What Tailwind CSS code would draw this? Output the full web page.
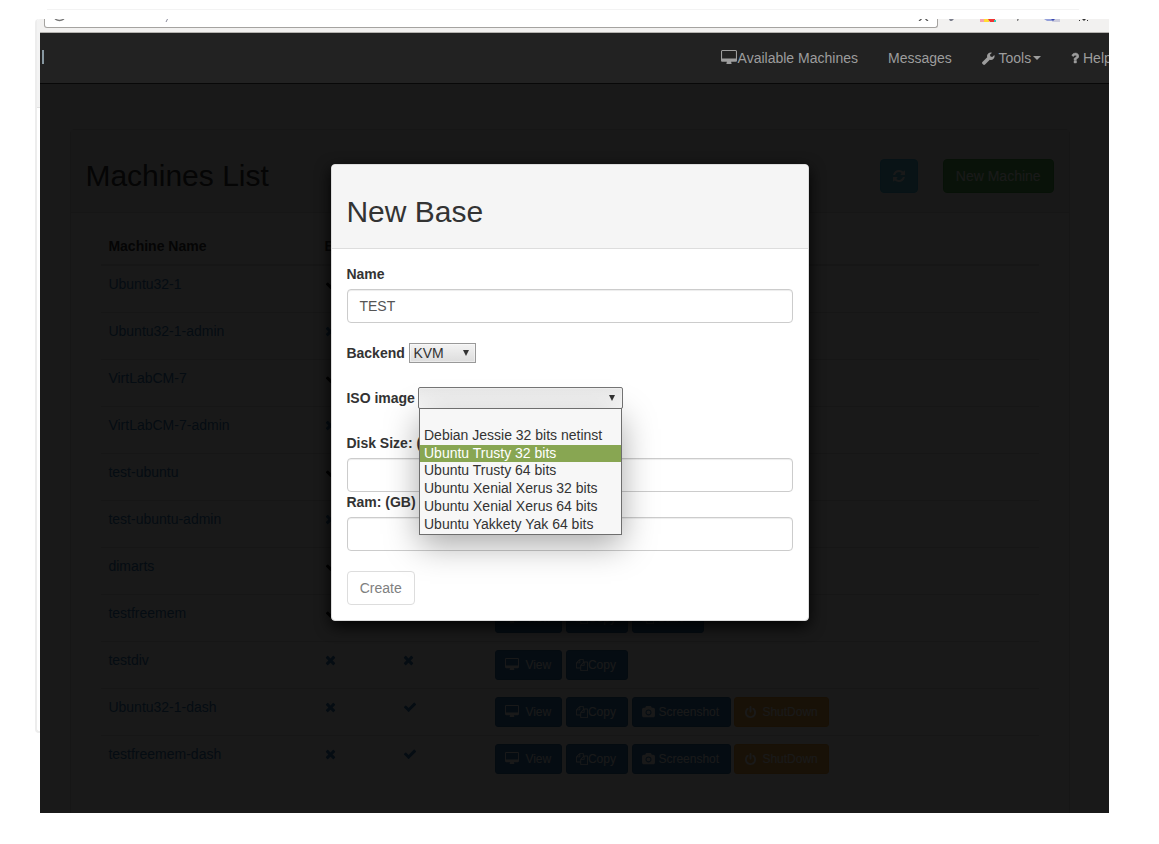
<!DOCTYPE html>
<html lang="en">
<head>
<meta charset="utf-8">
<title>Machines List</title>
<script src="https://cdn.jsdelivr.net/npm/@tailwindcss/browser@4"></script>
</head>
<body class="relative h-[844px] -indent-[0.6px] overflow-hidden bg-white font-['Liberation_Sans',Arial,sans-serif] text-[14px] leading-5 text-[#333]">
<svg class="hidden">
  <symbol id="desktop" viewBox="64 0 1920 1792"><path d="M1856 992v-832q0-13-9.5-22.5t-22.5-9.5h-1600q-13 0-22.5 9.5t-9.5 22.5v832q0 13 9.5 22.5t22.5 9.5h1600q13 0 22.5-9.5t9.5-22.5zm128-832v1088q0 66-47 113t-113 47h-544q0 37 16 77.5t32 71 16 43.5q0 26-19 45t-45 19h-512q-26 0-45-19t-19-45q0-14 16-44t32-70 16-78h-544q-66 0-113-47t-47-113v-1088q0-66 47-113t113-47h1600q66 0 113 47t47 113z"/></symbol>
  <symbol id="check" viewBox="0 0 1792 1792"><path d="M1671 566q0 40-28 68l-724 724-136 136q-28 28-68 28t-68-28l-136-136-362-362q-28-28-28-68t28-68l136-136q28-28 68-28t68 28l294 295 656-657q28-28 68-28t68 28l136 136q28 28 28 68z"/></symbol>
  <symbol id="times" viewBox="192 0 1408 1792"><path d="M1490 1322q0 40-28 68l-136 136q-28 28-68 28t-68-28l-294-294-294 294q-28 28-68 28t-68-28l-136-136q-28-28-28-68t28-68l294-294-294-294q-28-28-28-68t28-68l136-136q28-28 68-28t68 28l294 294 294-294q28-28 68-28t68 28l136 136q28 28 28 68t-28 68l-294 294 294 294q28 28 28 68z"/></symbol>
  <symbol id="refresh" viewBox="128 0 1536 1792"><path d="M1639 1056q0 5-1 7-64 268-268 434.5t-478 166.5q-146 0-282.5-55t-243.5-157l-129 129q-19 19-45 19t-45-19-19-45v-448q0-26 19-45t45-19h448q26 0 45 19t19 45-19 45l-137 137q71 66 161 102t187 36q134 0 250-65t186-179q11-17 53-117 8-23 30-23h192q13 0 22.5 9.5t9.5 22.5zm25-800v448q0 26-19 45t-45 19h-448q-26 0-45-19t-19-45 19-45l138-138q-148-137-349-137-134 0-250 65t-186 179q-11 17-53 117-8 23-30 23h-199q-13 0-22.5-9.5t-9.5-22.5v-7q65-268 270-434.5t480-166.5q146 0 284 55.5t245 156.5l130-129q19-19 45-19t45 19 19 45z"/></symbol>
  <symbol id="wrench" viewBox="0 0 14 14"><path d="M13.300 3.200L11 5.500 9.200 4.800 8.500 3 10.800.7A4 4 0 0 0 5.600 5.600L.7 10.500a1.700 1.700 0 0 0 0 2.500l.3.300a1.700 1.700 0 0 0 2.500 0L8.400 8.400A4 4 0 0 0 13.300 3.200z"/></symbol>
  <symbol id="question" viewBox="384 0 1024 1792"><path stroke="currentColor" stroke-width="60" d="M1088 1256v240q0 16-12 28t-28 12h-240q-16 0-28-12t-12-28v-240q0-16 12-28t28-12h240q16 0 28 12t12 28zm316-600q0 54-15.500 101t-35 76.500-55 59.500-57.500 43.500-61 35.500q-41 23-68.500 65t-27.500 67q0 17-12 32.500t-28 15.500h-240q-15 0-25.500-18.500t-10.500-37.500v-45q0-83 65-156.500t143-108.500q59-27 84-56t25-76q0-42-46.500-74t-107.500-32q-65 0-108 29-35 25-107 115-13 16-31 16-12 0-25-8l-164-125q-13-10-15.500-25t5.500-28q160-266 464-266 80 0 161 31t146 83 106 127.500 41 158.500z"/></symbol>
  <symbol id="camera" viewBox="0 0 1920 1792"><path d="M960 672q119 0 203.5 84.500t84.500 203.500-84.500 203.500-203.500 84.500-203.500-84.500-84.500-203.500 84.500-203.500 203.500-84.500zm704-416q106 0 181 75t75 181v896q0 106-75 181t-181 75h-1408q-106 0-181-75t-75-181v-896q0-106 75-181t181-75h224l51-136q19-49 69.500-84.500t103.500-35.500h512q53 0 103.500 35.500t69.500 84.500l51 136h224zm-704 1152q185 0 316.500-131.500t131.500-316.500-131.500-316.500-316.500-131.500-316.500 131.500-131.500 316.500 131.500 316.500 316.500 131.500z"/></symbol>
  <symbol id="power" viewBox="128 0 1536 1792"><path d="M1664 896q0 156-61 298t-164 245-245 164-298 61-298-61-245-164-164-245-61-298q0-182 80.500-343t226.500-270q43-32 95.500-25t83.500 50q32 42 24.500 94.500t-49.500 84.500q-98 74-151.500 181t-53.500 228q0 104 40.500 198.500t109.500 163.500 163.500 109.500 198.500 40.500 198.500-40.500 163.500-109.500 109.500-163.500 40.500-198.500q0-121-53.500-228t-151.500-181q-42-32-49.500-84.500t24.500-94.500q31-43 84-50t95 25q146 109 226.500 270t80.500 343zm-640-768v640q0 52-38 90t-90 38-90-38-38-90v-640q0-52 38-90t90-38 90 38 38 90z"/></symbol>
  <symbol id="copy" viewBox="0 0 1792 1792"><path d="M1696 384q40 0 68 28t28 68v1216q0 40-28 68t-68 28h-960q-40 0-68-28t-28-68v-288h-544q-40 0-68-28t-28-68v-672q0-40 20-88t48-76l408-408q28-28 76-48t88-20h416q40 0 68 28t28 68v328q68-40 128-40h416zm-544 213l-299 299h299v-299zm-640-384l-299 299h299v-299zm196 647l316-316v-416h-384v416q0 40-28 68t-68 28h-416v640h512v-256q0-40 20-88t48-76zm956 804v-1152h-384v416q0 40-28 68t-68 28h-416v640h896z"/></symbol>
</svg>

<div class="ml-[47px] mt-[9px] h-px w-[1032px] bg-[#f3f3f3]"></div>

<div class="flex pt-[9px]">
  <!-- window edge left of the page -->
  <div class="ml-[35px] h-[714px] w-[5px] rounded-l-[4px] border-l-2 border-b-2 border-[#ededed]">
    <div class="h-[89px] rounded-tl-[3px] border-b border-[#e2e2e2] bg-[#f3f3f3]"></div>
  </div>

  <div class="h-[794px] w-[1069px] overflow-hidden">
    <!-- browser toolbar -->
    <div class="flex h-[14px] border-b border-[#b5b3b0] bg-[#f2f1f0]">
      <div class="ml-1 flex h-[9px] w-[894px] justify-between overflow-hidden rounded-b-[3px] border border-t-0 border-[#a5a3a0] bg-white pr-[8px] pl-[9px]">
        <div class="flex gap-[100px]">
          <svg class="h-[3px] w-[11px]" viewBox="0 0 11 3"><path d="M1 0q4.500 3 9 0" fill="none" stroke="#777" stroke-width="1.500"/></svg>
          <svg class="h-[3px] w-[3px]" viewBox="0 0 3 3"><path d="M2.500 0L1 3" stroke="#889" stroke-width="1"/></svg>
        </div>
        <svg class="h-[2px] w-[11px]" viewBox="0 0 11 2"><path d="M3.500 0L1 2M7.500 0L10 2" stroke="#555" stroke-width="1.300"/></svg>
      </div>
      <svg class="ml-[10px] h-[3px] w-[150px]" viewBox="0 0 150 3">
        <path d="M1 0h5l-2 2h-2z" fill="#7c7f8c"/>
        <path d="M32 0h4v3h-4z" fill="#f4a0b0"/><path d="M36 0h5v3h-5z" fill="#fd3"/><path d="M40 0h7v3h-5z" fill="#e33"/><path d="M46 1h2v2h-2z" fill="#3cb"/>
        <path d="M69 0h2l-1 2h-1z" fill="#888"/>
        <path d="M96 0h9v2h-6z" fill="#94a0da"/><path d="M105 0h7v3h-8z" fill="#ccd"/><path d="M103 0h4l-2 2z" fill="#3948b0"/>
        <path d="M131 1h1v1h-1zM139 1h1v1h-1zM134 0h4l-2 2z" fill="#333"/>
      </svg>
    </div>

    <!-- navbar -->
    <nav class="flex h-[51px] items-start border-b border-[#080808] bg-[#222] pt-[15px] indent-0 whitespace-nowrap text-[#9d9d9d]">
      <div class="mt-[2px] ml-[2px] h-[14px] w-[2px] shrink-0 bg-[#8797a0]"></div>
      <div class="ml-[677px] flex w-[167px] shrink-0 items-center"><svg class="mr-[0.6px] mb-px h-[15px] w-4 shrink-0 fill-current"><use href="#desktop"/></svg>Available Machines</div>
      <div class="w-[94px] shrink-0">Messages</div>
      <div class="flex w-[89px] shrink-0 items-center"><svg class="mr-[3.500px] h-[13px] w-[13px] shrink-0 fill-current"><use href="#wrench"/></svg>Tools<span class="ml-[2px] border-x-4 border-t-4 border-x-transparent border-t-current"></span></div>
      <div class="flex shrink-0 items-center"><svg class="mr-1 h-[14px] w-2 shrink-0 fill-current"><use href="#question"/></svg>Help</div>
    </nav>

    <!-- page beneath the modal -->
    <main class="relative h-[729px] overflow-hidden bg-white pt-[45px] pl-[30px]">
      <section class="h-[720px] w-[1000px] rounded-t border border-[#ddd]">
        <header class="flex h-[83px] items-start border-b border-[#ddd] bg-[#f5f5f5] pl-[15px]">
          <h2 class="mt-[29px] w-[794px] text-[30px] leading-[33px]">Machines List</h2>
          <div class="mt-[29px] flex h-[34px] w-[38px] items-center justify-center rounded border border-[#46b8da] bg-[#5bc0de] text-white"><svg class="h-[14px] w-3 fill-current"><use href="#refresh"/></svg></div>
          <div class="mt-[29px] ml-[25px] flex h-[34px] w-[111px] items-center justify-center rounded border border-[#4cae4c] bg-[#5cb85c] whitespace-nowrap text-white">New Machine</div>
        </header>
        <div class="pt-[15px] pl-[30px]">
          <div class="flex h-[38px] w-[938px] border-b-2 border-[#ddd] pt-2 pl-2 font-bold">
            <div class="w-[216px]">Machine Name</div><div>Base</div>
          </div>
          <div id="rows" class="w-[938px]"></div>
        </div>
      </section>
      <div class="absolute inset-0 bg-black/90"></div>
    </main>
  </div>
</div>

<!-- modal -->
<div class="absolute top-[164px] left-[331px] h-[457px] w-[478px] rounded border border-[#ddd] bg-white shadow-[0_5px_15px_rgba(0,0,0,0.9)]">
  <div class="h-[84px] rounded-t-[3px] border-b border-[#ddd] bg-[#f5f5f5] px-[15px] pt-[30px]">
    <h2 class="text-[30px] leading-[33px]">New Base</h2>
  </div>
  <div class="px-[15px] pt-[15px]">
    <div class="font-bold">Name</div>
    <div class="mt-[5px] h-[34px] rounded border border-[#ccc] px-3 py-[6px] text-[#555] shadow-[inset_0_1px_1px_rgba(0,0,0,0.075)]">TEST</div>
    <div class="mt-5 flex items-center"><b class="w-[58px]">Backend</b>
      <div class="ml-1 flex h-5 w-[67px] items-center justify-between border border-[#999] bg-linear-to-b from-[#f3f3f3] to-[#ddd] pr-[6px] pl-1 shadow-[inset_0_0_0_1px_rgba(255,255,255,0.4)]">KVM<svg class="h-[6px] w-[6px]" viewBox="0 0 6 6"><path d="M0 0h6L3 6z" fill="#333"/></svg></div>
    </div>
    <div class="relative mt-[24px] flex h-[22px] items-center"><b>ISO image</b>
      <div class="absolute top-0 left-[71px] flex h-[22px] w-[205px] items-center justify-end rounded-[2px] border-[1.500px] border-[#757575] bg-linear-to-b from-[#e8e8e8] to-[#fdfdfd] pr-[7px] shadow-[inset_0_0_0_1px_rgba(255,255,255,0.3)]"><svg class="h-[6px] w-[6px]" viewBox="0 0 6 6"><path d="M0 0h6L3 6z" fill="#333"/></svg></div>
      <div class="absolute top-[21px] left-[72px] z-10 h-[127px] w-[203px] border border-[#6e6e6e] bg-[#f7f7f7] indent-0 leading-[18px] whitespace-nowrap shadow-[0_10px_32px_rgba(0,0,0,0.34)]">
        <div class="h-[18px]"></div>
        <div class="h-[18px] pl-1 leading-[17px]">Debian Jessie 32 bits netinst</div>
        <div class="h-[17px] bg-[#88a652] pl-1 leading-[17px] text-white">Ubuntu Trusty 32 bits</div>
        <div class="h-[18px] pl-1 leading-[17px]">Ubuntu Trusty 64 bits</div>
        <div class="h-[18px] pl-1 leading-[17px]">Ubuntu Xenial Xerus 32 bits</div>
        <div class="h-[18px] pl-1 leading-[17px]">Ubuntu Xenial Xerus 64 bits</div>
        <div class="h-[18px] pl-1 leading-[17px]">Ubuntu Yakkety Yak 64 bits</div>
      </div>
    </div>
    <div class="mt-6 font-bold">Disk Size: (GB)</div>
    <div class="mt-[5px] h-[34px] rounded border border-[#ccc] shadow-[inset_0_1px_1px_rgba(0,0,0,0.075)]"></div>
    <div class="font-bold">Ram: (GB)</div>
    <div class="mt-[5px] h-[34px] rounded border border-[#ccc] shadow-[inset_0_1px_1px_rgba(0,0,0,0.075)]"></div>
    <div class="mt-5 flex h-[34px] w-[68px] items-center justify-center rounded border border-[#ddd] text-[#808080]">Create</div>
  </div>
</div>

<script>
const icon = (id, cls) => `<svg class="${cls}"><use href="#${id}"/></svg>`;
const blue = 'flex h-[30px] items-center rounded-[3px] border border-[#2e6da4] bg-[#337ab7] text-[12px] text-white pl-[9px] mr-1 ';
const view = `<div class="${blue} w-[67px]">${icon('desktop', 'h-[13px] w-[14px] fill-current mr-[7px] mb-px')}View</div>`;
const copy = `<div class="${blue} w-[62px]">${icon('copy', 'h-[12px] w-[12px] fill-current mr-[0.5px]')}Copy</div>`;
const start = `<div class="${blue} w-[72px]">${icon('copy', 'h-[12px] w-[12px] fill-current mr-1')}Start</div>`;
const shot = `<div class="${blue} w-[99px]">${icon('camera', 'h-[12px] w-[13px] fill-current mr-[4px]')}Screenshot</div>`;
const down = `<div class="-ml-px flex h-[30px] w-[95px] items-center rounded-[3px] border border-[#eea236] bg-[#f0ad4e] pl-[10px] text-[12px] text-white">${icon('power', 'h-[13px] w-[11px] fill-current mr-[7px]')}ShutDown</div>`;
const mark = (m, cls) => m === 'X' ? icon('times', 'h-[14px] w-[11px] fill-current ' + cls) : icon('check', 'h-[14px] w-[14px] fill-current ' + cls);
const L = 'text-[#337ab7]', D = 'text-[#000]';
const data = [
  ['Ubuntu32-1', 'V', D, '', ''], ['Ubuntu32-1-admin', 'X', L, '', ''], ['VirtLabCM-7', 'V', D, '', ''],
  ['VirtLabCM-7-admin', 'X', L, '', ''], ['test-ubuntu', 'V', D, '', ''], ['test-ubuntu-admin', 'X', L, '', ''],
  ['dimarts', 'V', D, '', ''], ['testfreemem', 'V', D, '', view + copy + start],
  ['testdiv', 'X', L, 'X', view + copy], ['Ubuntu32-1-dash', 'X', L, 'V', view + copy + shot + down],
  ['testfreemem-dash', 'X', L, 'V', view + copy + shot + down]
];
document.getElementById('rows').innerHTML = data.map((r, i) => `
  <div class="flex items-start border-[#ddd] pt-2 pl-2 ${i ? 'h-[47px] border-t' : 'h-[46px]'} ${i % 2 ? '' : 'bg-[#f9f9f9]'}">
    <div class="w-[216px] text-[#337ab7]">${r[0]}</div>
    <div class="w-[78px] pt-[3px]">${mark(r[1], r[2])}</div>
    <div class="w-[92px] pt-[3px]">${r[3] ? mark(r[3], L) : ''}</div>
    <div class="flex">${r[4]}</div>
  </div>`).join('');
</script>
</body>
</html>
